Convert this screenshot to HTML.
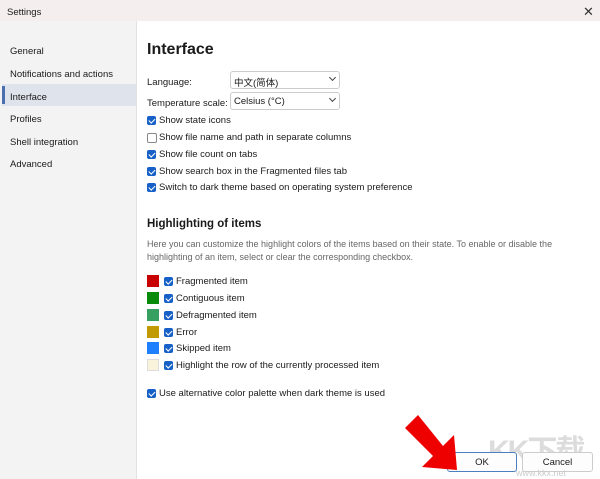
<!DOCTYPE html><html><head><style>
body{margin:0;width:600px;height:479px;overflow:hidden;font-family:"Liberation Sans","Noto Sans CJK SC",sans-serif;font-size:9.5px;color:#1a1a1a;background:#fff;position:relative}
.a{position:absolute;white-space:nowrap;margin-top:1.5px}
.title{left:0;top:0;width:600px;height:21px;background:#f4eeee;margin-top:0}
.side{left:0;top:21px;width:136px;height:458px;background:#f3f3f3;border-right:1px solid #e2e2e2;margin-top:0}
.nav{left:10px}
.cb{position:absolute;width:9px;height:9px;border-radius:2px;background:#1660c8;margin-top:2px}
.cb:after{content:"";position:absolute;left:2.5px;top:1px;width:2.5px;height:5px;border:solid #fff;border-width:0 1.2px 1.2px 0;transform:rotate(45deg)}
.cb.off{background:#fff;border:1px solid #888;width:8px;height:8px}.cb.off:after{display:none}
.sw{position:absolute;left:147px;width:12px;height:12px;margin-top:1px}
.dd{position:absolute;left:230px;width:108px;height:16px;border:1px solid #ccc;border-radius:3px;background:#fff}
.dd span{position:absolute;left:3px;top:3px}
.dd i{position:absolute;right:4px;top:3px;width:4px;height:4px;border:solid #444;border-width:0 1px 1px 0;transform:rotate(45deg)}
.btn{position:absolute;top:452px;height:18px;border:1px solid #ccc;border-radius:3px;background:#fdfdfd;text-align:center;line-height:19px}
</style></head><body>
<div class="a title"></div><div class="a" style="left:7px;top:5px">Settings</div>
<div class="a" style="left:583px;top:2px;font-size:13px;color:#333">✕</div>
<div class="a side"></div>
<div class="a" style="left:2px;top:84px;width:134px;height:22px;background:#dfe3ec;margin-top:0"></div>
<div class="a" style="left:2px;top:86px;width:3px;height:18px;background:#4c6fb0;margin-top:0"></div>
<div class="a nav" style="top:44px">General</div>
<div class="a nav" style="top:67px">Notifications and actions</div>
<div class="a nav" style="top:90px">Interface</div>
<div class="a nav" style="top:112px">Profiles</div>
<div class="a nav" style="top:135px">Shell integration</div>
<div class="a nav" style="top:157px">Advanced</div>
<div class="a" style="left:147px;top:39px;font-size:16px;font-weight:bold">Interface</div>
<div class="a" style="left:147px;top:75px">Language:</div>
<div class="a" style="left:147px;top:96px">Temperature scale:</div>
<div class="dd" style="top:71px"><span>中文(简体)</span><i></i></div>
<div class="dd" style="top:92px"><span>Celsius (°C)</span><i></i></div>
<div class="cb" style="left:147px;top:114px"></div><div class="a" style="left:159px;top:113px">Show state icons</div>
<div class="cb off" style="left:147px;top:131px"></div><div class="a" style="left:159px;top:130px">Show file name and path in separate columns</div>
<div class="cb" style="left:147px;top:148px"></div><div class="a" style="left:159px;top:147px">Show file count on tabs</div>
<div class="cb" style="left:147px;top:165px"></div><div class="a" style="left:159px;top:164px">Show search box in the Fragmented files tab</div>
<div class="cb" style="left:147px;top:181px"></div><div class="a" style="left:159px;top:180px">Switch to dark theme based on operating system preference</div>
<div class="a" style="left:147px;top:216px;font-size:11.5px;font-weight:bold">Highlighting of items</div>
<div class="a" style="left:147px;top:236px;color:#666;font-size:9px;line-height:13px">Here you can customize the highlight colors of the items based on their state. To enable or disable the<br>highlighting of an item, select or clear the corresponding checkbox.</div>
<div class="sw" style="top:274px;background:#c80000"></div><div class="cb" style="left:164px;top:275px"></div><div class="a" style="left:176px;top:274px">Fragmented item</div>
<div class="sw" style="top:291px;background:#0a8a0a"></div><div class="cb" style="left:164px;top:292px"></div><div class="a" style="left:176px;top:291px">Contiguous item</div>
<div class="sw" style="top:308px;background:#35a060"></div><div class="cb" style="left:164px;top:309px"></div><div class="a" style="left:176px;top:308px">Defragmented item</div>
<div class="sw" style="top:325px;background:#c09a00"></div><div class="cb" style="left:164px;top:326px"></div><div class="a" style="left:176px;top:325px">Error</div>
<div class="sw" style="top:341px;background:#1e7fff"></div><div class="cb" style="left:164px;top:342px"></div><div class="a" style="left:176px;top:341px">Skipped item</div>
<div class="sw" style="top:358px;background:#faf3dc;border:1px solid #ddd;width:10px;height:10px"></div><div class="cb" style="left:164px;top:359px"></div><div class="a" style="left:176px;top:358px">Highlight the row of the currently processed item</div>
<div class="cb" style="left:147px;top:387px"></div><div class="a" style="left:159px;top:386px">Use alternative color palette when dark theme is used</div>
<div class="a" style="left:488px;top:424px;font-size:30px;color:#dcdcdc;font-weight:bold;letter-spacing:-2px">KK下载</div>
<div class="btn" style="left:447px;width:68px;border-color:#4a7fc0">OK</div>
<div class="btn" style="left:522px;width:69px">Cancel</div>
<div class="a" style="left:516px;top:466px;color:#ccc;font-size:9px">www.kkx.net</div>
<svg class="a" style="left:400px;top:410px;margin-top:0" width="65" height="65"><polygon points="18,5 5,18 33,46 22,57 57,60 54,25 43,36" fill="#ee0000"/></svg>
</body></html>
